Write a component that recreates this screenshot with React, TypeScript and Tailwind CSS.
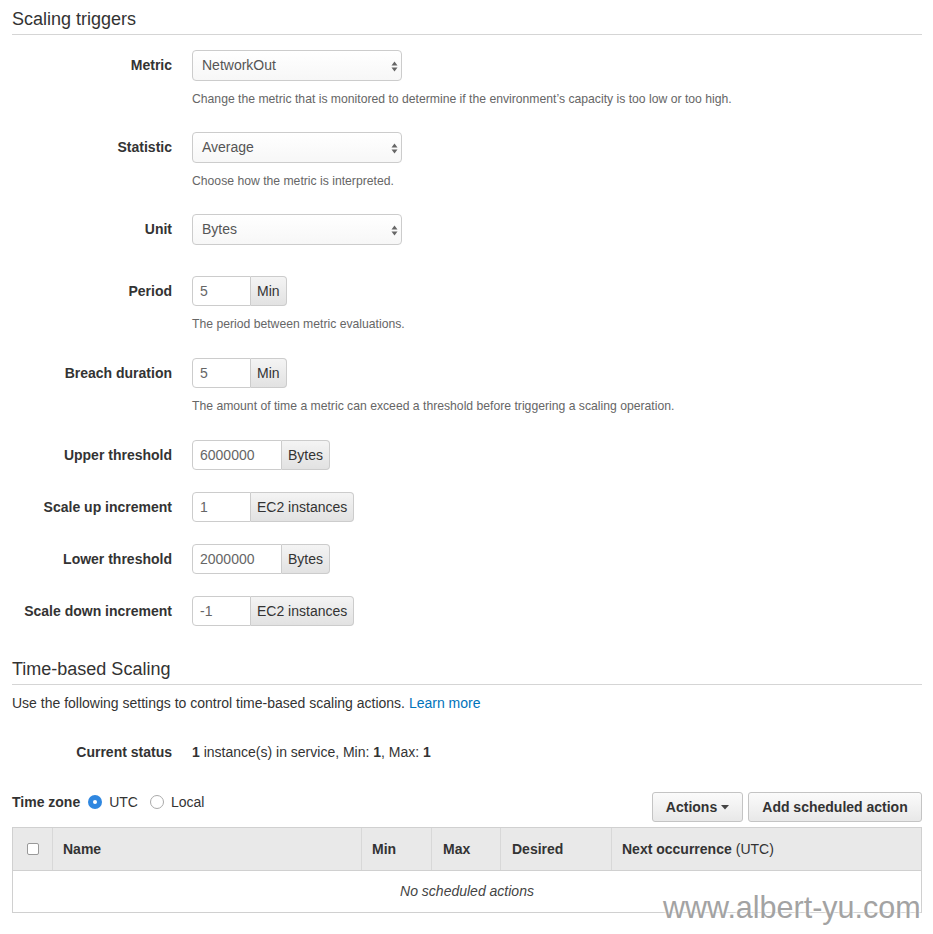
import React from "react";

const font = "font-['Liberation_Sans',Arial,sans-serif]";

function SelectBox({ value }: { value: string }) {
  return (
    <div className="relative flex h-[31px] w-[210px] items-center rounded-[4px] border border-[#ccc] bg-gradient-to-b from-white to-[#f7f7f7] pl-[9px] text-[14px] text-[#555]">
      {value}
      <svg className="absolute right-[3px] top-[10px]" width="7" height="11" viewBox="0 0 7 11">
        <path d="M3.5 0.5 L6.5 4.5 L0.5 4.5 Z" fill="#666" />
        <path d="M0.5 6.5 L6.5 6.5 L3.5 10.5 Z" fill="#666" />
      </svg>
    </div>
  );
}

function InputGroup({ value, unit, inputW }: { value: string; unit: string; inputW: string }) {
  return (
    <div className="flex h-[30px]">
      <div className={`${inputW} flex items-center rounded-l-[4px] border border-[#ccc] bg-white pl-[7px] text-[14px] text-[#666]`}>
        {value}
      </div>
      <div className="flex items-center rounded-r-[4px] border border-l-0 border-[#ccc] bg-gradient-to-b from-[#f4f4f4] to-[#e2e2e2] px-[6px] text-[14px] text-[#333]">
        {unit}
      </div>
    </div>
  );
}

function Row({ label, children, help, mb }: { label: string; children: React.ReactNode; help?: string; mb: string }) {
  return (
    <div className={`grid grid-cols-[180px_1fr] ${mb}`}>
      <div className="flex h-[30px] items-center justify-end pr-[20px] text-[14px] font-bold text-[#333]">{label}</div>
      <div>
        {children}
        {help && <div className="mt-[10px] text-[12.2px] leading-[16px] text-[#666]">{help}</div>}
      </div>
    </div>
  );
}

export default function App() {
  return (
    <div className={`relative min-h-[934px] bg-white pl-[12px] pr-[11px] ${font} text-[#333]`}>
      {/* scaling triggers */}
      <h2 className="border-b border-[#d5d5d5] pb-[4px] pt-[8px] text-[18px] leading-[22px] text-[#333]">Scaling triggers</h2>
      <div className="mt-[15px]">
        <Row label="Metric" mb="mb-[25px]" help="Change the metric that is monitored to determine if the environment’s capacity is too low or too high.">
          <SelectBox value="NetworkOut" />
        </Row>
        <Row label="Statistic" mb="mb-[25px]" help="Choose how the metric is interpreted.">
          <SelectBox value="Average" />
        </Row>
        <Row label="Unit" mb="mb-[31px]">
          <SelectBox value="Bytes" />
        </Row>
        <Row label="Period" mb="mb-[26px]" help="The period between metric evaluations.">
          <InputGroup value="5" unit="Min" inputW="w-[59px]" />
        </Row>
        <Row label="Breach duration" mb="mb-[26px]" help="The amount of time a metric can exceed a threshold before triggering a scaling operation.">
          <InputGroup value="5" unit="Min" inputW="w-[59px]" />
        </Row>
        <Row label="Upper threshold" mb="mb-[22px]">
          <InputGroup value="6000000" unit="Bytes" inputW="w-[90px]" />
        </Row>
        <Row label="Scale up increment" mb="mb-[22px]">
          <InputGroup value="1" unit="EC2 instances" inputW="w-[59px]" />
        </Row>
        <Row label="Lower threshold" mb="mb-[22px]">
          <InputGroup value="2000000" unit="Bytes" inputW="w-[90px]" />
        </Row>
        <Row label="Scale down increment" mb="mb-0">
          <InputGroup value="-1" unit="EC2 instances" inputW="w-[59px]" />
        </Row>
      </div>

      {/* time-based scaling */}
      <h2 className="mt-[32px] border-b border-[#d5d5d5] pb-[4px] text-[18px] leading-[22px] text-[#333]">Time-based Scaling</h2>
      <p className="mt-[8px] text-[14px] leading-[20px] text-[#333]">
        Use the following settings to control time-based scaling actions.{" "}
        <a className="text-[#0073bb]" href="#">Learn more</a>
      </p>
      <div className="mt-[29px] grid grid-cols-[180px_1fr] text-[14px] leading-[20px]">
        <div className="pr-[20px] text-right font-bold text-[#333]">Current status</div>
        <div className="text-[#333]">
          <b>1</b> instance(s) in service, Min: <b>1</b>, Max: <b>1</b>
        </div>
      </div>

      <div className="mt-[30px] flex items-start justify-between">
        <div className="flex items-center text-[14px] leading-[20px]">
          <span className="font-bold">Time zone</span>
          <span className="ml-[8px] flex h-[14px] w-[14px] items-center justify-center rounded-full bg-[#2f87e0]">
            <span className="h-[4px] w-[4px] rounded-full bg-white" />
          </span>
          <span className="ml-[7px]">UTC</span>
          <span className="ml-[12px] h-[14px] w-[14px] rounded-full border border-[#aaa] bg-white" />
          <span className="ml-[7px]">Local</span>
        </div>
        <div className="flex gap-[5px]">
          <button className="flex h-[30px] w-[91px] items-center justify-center gap-[4px] rounded-[3px] border border-[#c4c4c4] bg-gradient-to-b from-[#fbfbfb] to-[#e8e8e8] text-[14px] font-bold text-[#333]">
            Actions
            <svg width="8" height="5" viewBox="0 0 8 5"><path d="M0 0 H8 L4 4.5 Z" fill="#444" /></svg>
          </button>
          <button className="flex h-[30px] w-[174px] items-center justify-center rounded-[3px] border border-[#c4c4c4] bg-gradient-to-b from-[#fbfbfb] to-[#e8e8e8] text-[14px] font-bold text-[#333]">
            Add scheduled action
          </button>
        </div>
      </div>

      {/* table */}
      <div className="mt-[5px] border border-[#d0d0d0]">
        <div className="grid h-[43px] grid-cols-[40px_309px_70px_69px_111px_1fr] border-b border-[#d0d0d0] bg-[#e9e9e9] text-[14px] font-bold text-[#333]">
          <div className="flex items-center justify-center border-r border-[#d8d8d8]">
            <span className="h-[12px] w-[12px] rounded-[2px] border border-[#999] bg-white" />
          </div>
          <div className="flex items-center border-r border-[#d8d8d8] pl-[10px]">Name</div>
          <div className="flex items-center border-r border-[#d8d8d8] pl-[10px]">Min</div>
          <div className="flex items-center border-r border-[#d8d8d8] pl-[11px]">Max</div>
          <div className="flex items-center border-r border-[#d8d8d8] pl-[11px]">Desired</div>
          <div className="flex items-center pl-[10px]">
            Next occurrence<span className="ml-[4px] font-normal">(UTC)</span>
          </div>
        </div>
        <div className="flex h-[41px] items-center justify-center text-[14px] italic text-[#444]">No scheduled actions</div>
      </div>

      {/* watermark */}
      <div className="absolute left-[663px] top-[892px] text-[30.5px] leading-[30px] text-[#a3a3a3] [text-shadow:0_0_3px_#fff,0_0_3px_#fff]">
        www.albert-yu.com
      </div>
    </div>
  );
}
